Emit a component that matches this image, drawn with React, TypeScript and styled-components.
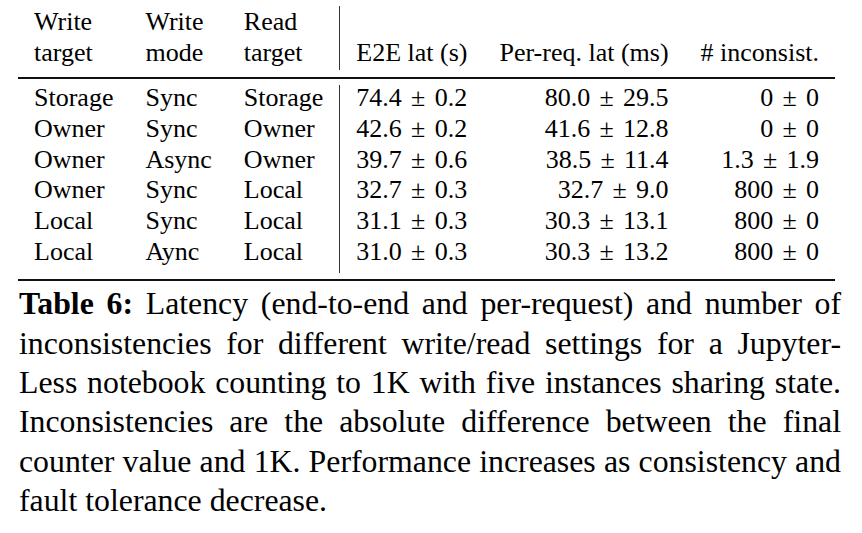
import React from "react";
import styled, { createGlobalStyle } from "styled-components";

const Global = createGlobalStyle`
  html, body { margin: 0; padding: 0; background: #fff; }
`;

const Page = styled.div`
  box-sizing: border-box;
  width: 862px;
  padding: 6.4px 0 0 18px;
  font-family: "Liberation Serif", "Times New Roman", serif;
  color: #000;
`;

const Table = styled.table`
  border-collapse: separate;
  border-spacing: 0;
  font-size: 26px;
  font-family: "Liberation Serif", "Times New Roman", serif;
`;

const HeadCell = styled.th<{ $align?: string; $divider?: boolean }>`
  font-weight: normal;
  line-height: 31px;
  padding: 0 16px 1.6px;
  vertical-align: bottom;
  white-space: nowrap;
  text-align: ${(p) => p.$align || "left"};
  border-right: ${(p) => (p.$divider ? "1px solid #333" : "none")};
`;

const Body = styled.tbody`
  tr:last-child td {
    padding-bottom: 8.2px;
  }
`;

const Cell = styled.td<{ $align?: string; $divider?: boolean }>`
  line-height: 25.6px;
  padding: 0 16px 5.2px;
  white-space: nowrap;
  text-align: ${(p) => p.$align || "left"};
  border-right: ${(p) => (p.$divider ? "1px solid #333" : "none")};
`;

const RuleCell = styled.td`
  padding: 0;
`;

const Rule = styled.div<{ $top: number; $bottom: number }>`
  height: 2px;
  background: #111;
  margin: ${(p) => p.$top}px 0 ${(p) => p.$bottom}px;
`;

const Pm = styled.span`
  margin: 0 9.3px;
`;

const Caption = styled.div`
  width: 822px;
  margin: 3.7px 0 0 1px;
  font-size: 31.8px;
  line-height: 39.3px;
`;

const CapLine = styled.div<{ $last?: boolean }>`
  white-space: nowrap;
  text-align: justify;
  text-align-last: ${(p) => (p.$last ? "left" : "justify")};
`;

const Bold = styled.b`
  font-weight: bold;
`;

type Row = [string, string, string, [string, string], [string, string], [string, string]];

const rows: Row[] = [
  ["Storage", "Sync", "Storage", ["74.4", "0.2"], ["80.0", "29.5"], ["0", "0"]],
  ["Owner", "Sync", "Owner", ["42.6", "0.2"], ["41.6", "12.8"], ["0", "0"]],
  ["Owner", "Async", "Owner", ["39.7", "0.6"], ["38.5", "11.4"], ["1.3", "1.9"]],
  ["Owner", "Sync", "Local", ["32.7", "0.3"], ["32.7", "9.0"], ["800", "0"]],
  ["Local", "Sync", "Local", ["31.1", "0.3"], ["30.3", "13.1"], ["800", "0"]],
  ["Local", "Aync", "Local", ["31.0", "0.3"], ["30.3", "13.2"], ["800", "0"]],
];

const Val = ({ v }: { v: [string, string] }) => (
  <>
    {v[0]}
    <Pm>±</Pm>
    {v[1]}
  </>
);

const captionLines: React.ReactNode[] = [
  <>
    <Bold>Table 6:</Bold> Latency (end-to-end and per-request) and number of
  </>,
  "inconsistencies for different write/read settings for a Jupyter-",
  "Less notebook counting to 1K with five instances sharing state.",
  "Inconsistencies are the absolute difference between the final",
  "counter value and 1K. Performance increases as consistency and",
  "fault tolerance decrease.",
];

export default function App() {
  return (
    <Page>
      <Global />
      <Table>
        <thead>
          <tr>
            <HeadCell>
              Write
              <br />
              target
            </HeadCell>
            <HeadCell>
              Write
              <br />
              mode
            </HeadCell>
            <HeadCell $divider>
              Read
              <br />
              target
            </HeadCell>
            <HeadCell>E2E lat (s)</HeadCell>
            <HeadCell $align="right">Per-req. lat (ms)</HeadCell>
            <HeadCell $align="right"># inconsist.</HeadCell>
          </tr>
          <tr>
            <RuleCell colSpan={6}>
              <Rule $top={7} $bottom={6.1} />
            </RuleCell>
          </tr>
        </thead>
        <Body>
          {rows.map((r, i) => (
            <tr key={i}>
              <Cell>{r[0]}</Cell>
              <Cell>{r[1]}</Cell>
              <Cell $divider>{r[2]}</Cell>
              <Cell>
                <Val v={r[3]} />
              </Cell>
              <Cell $align="right">
                <Val v={r[4]} />
              </Cell>
              <Cell $align="right">
                <Val v={r[5]} />
              </Cell>
            </tr>
          ))}
        </Body>
        <tfoot>
          <tr>
            <RuleCell colSpan={6}>
              <Rule $top={6} $bottom={0} />
            </RuleCell>
          </tr>
        </tfoot>
      </Table>
      <Caption>
        {captionLines.map((l, i) => (
          <CapLine key={i} $last={i === captionLines.length - 1}>
            {l}
          </CapLine>
        ))}
      </Caption>
    </Page>
  );
}
